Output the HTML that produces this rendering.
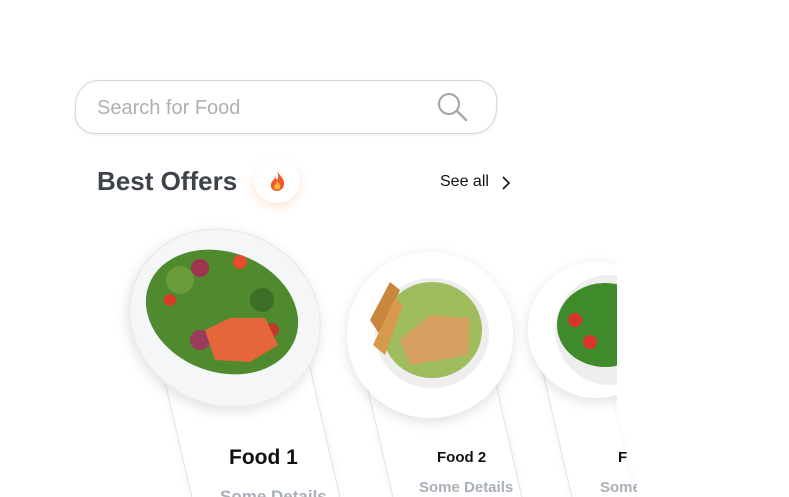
<!DOCTYPE html>
<html><head><style>
html,body{margin:0;width:789px;height:497px;overflow:hidden}
body{background:#fff;position:relative;font-family:"Liberation Sans",sans-serif}
#w{position:absolute;left:0;top:0;width:789px;height:497px;overflow:hidden}
.abs{position:absolute;white-space:nowrap}
.search{left:75px;top:80px;width:420px;height:52px;border:1px solid #d4d4d4;border-radius:22px;box-shadow:0 1px 3px rgba(0,0,0,.08);transform:skewX(-4deg)}
.card{background:#fff;border-left:1px solid #e2e2e2;border-right:1px solid #e2e2e2;transform:skewX(13deg);transform-origin:0 0;box-shadow:0 0 8px rgba(0,0,0,.05)}
</style></head><body><div id="w">
<div class="abs search"></div>
<div class="abs" style="left:97px;top:97px;font-size:20px;color:#b0b0b0">Search for Food</div>
<svg class="abs" style="left:436px;top:92px" width="34" height="30"><circle cx="13" cy="12" r="10" fill="none" stroke="#a8a8a8" stroke-width="2.2"/><line x1="21" y1="19" x2="30" y2="28" stroke="#a8a8a8" stroke-width="2.5" stroke-linecap="round"/></svg>
<div class="abs" style="left:97px;top:166px;font-size:26px;font-weight:bold;color:#3d4349">Best Offers</div>
<div class="abs" style="left:254px;top:159px;width:46px;height:44px;border-radius:50%;background:#fff;box-shadow:0 4px 10px rgba(255,140,60,.22)"></div>
<svg class="abs" style="left:268px;top:170px" width="20" height="22"><path d="M9 1C12 6 17 9 16 15C15 19 12 21 9 21C5 21 2 18 3 14C4 10 7 10 7 6C8 8 8 9 9 10C11 7 10 4 9 1Z" fill="#f15a24"/><path d="M9 11C11 14 13 15 12 18C11 20 7 20 6 18C5 16 8 15 9 11Z" fill="#fbb03b"/></svg>
<div class="abs" style="left:440px;top:173px;font-size:16px;color:#111">See all</div>
<svg class="abs" style="left:500px;top:175px" width="12" height="16"><path d="M3 2L9 8L3 14" fill="none" stroke="#111" stroke-width="1.6"/></svg>

<div class="abs card" style="left:155px;top:340px;width:147px;height:157px"></div>
<div class="abs card" style="left:363px;top:370px;width:128px;height:127px"></div>
<div class="abs card" style="left:542px;top:370px;width:62px;height:127px;border-right:none"></div>

<svg class="abs" style="left:0;top:0" width="617" height="497">
<defs><filter id="sh"><feDropShadow dx="0" dy="4" stdDeviation="6" flood-opacity=".12"/></filter></defs>
<ellipse cx="225" cy="318" rx="97" ry="87" transform="rotate(25 225 318)" fill="#f4f6f7" stroke="#e3e6e8" filter="url(#sh)"/>
<ellipse cx="222" cy="312" rx="78" ry="60" transform="rotate(20 222 312)" fill="#4f8a2e"/>
<circle cx="180" cy="280" r="14" fill="#6b9b3a"/><circle cx="200" cy="268" r="9" fill="#a0344f"/><circle cx="240" cy="262" r="7" fill="#e74c2c"/><circle cx="170" cy="300" r="6" fill="#d93a2a"/><circle cx="262" cy="300" r="12" fill="#3d6e25"/>
<circle cx="200" cy="340" r="10" fill="#9a3a5c"/><circle cx="272" cy="330" r="7" fill="#c0392b"/>
<path d="M205 330L230 318L265 318L278 345L250 362L215 360Z" fill="#e5663a"/>
<circle cx="430" cy="335" r="83" fill="#fff" filter="url(#sh)"/>
<ellipse cx="432" cy="333" rx="57" ry="55" fill="#eee" />
<ellipse cx="432" cy="330" rx="50" ry="48" fill="#9fbd5f"/>
<path d="M400 340L430 315L470 318L468 355L410 365Z" fill="#d6a160"/>
<path d="M370 320L390 282L400 290L380 335Z" fill="#c9873d"/><path d="M373 345L395 298L403 305L385 355Z" fill="#d79a4c"/>
<circle cx="596" cy="330" r="68" fill="#fff" filter="url(#sh)"/>
<ellipse cx="610" cy="330" rx="55" ry="55" fill="#eee"/>
<ellipse cx="605" cy="325" rx="48" ry="42" fill="#3f8a2a"/>
<circle cx="575" cy="320" r="7" fill="#d9342b"/><circle cx="590" cy="342" r="7" fill="#d9342b"/>
</svg>

<div class="abs" style="left:229px;top:446px;font-size:21px;font-weight:bold;color:#111">Food 1</div>
<div class="abs" style="left:220px;top:487px;font-size:17px;font-weight:bold;color:#a9b0b8;height:10px;overflow:hidden">Some Details</div>
<div class="abs" style="left:437px;top:449px;font-size:15px;font-weight:bold;color:#111">Food 2</div>
<div class="abs" style="left:419px;top:479px;font-size:15px;font-weight:bold;color:#a9b0b8">Some Details</div>
<div class="abs" style="left:618px;top:449px;font-size:15px;font-weight:bold;color:#111;width:9px;overflow:hidden">Food 3</div>
<div class="abs" style="left:600px;top:479px;font-size:15px;font-weight:bold;color:#a9b0b8;width:37px;overflow:hidden">Some Details</div>
</div></body></html>
